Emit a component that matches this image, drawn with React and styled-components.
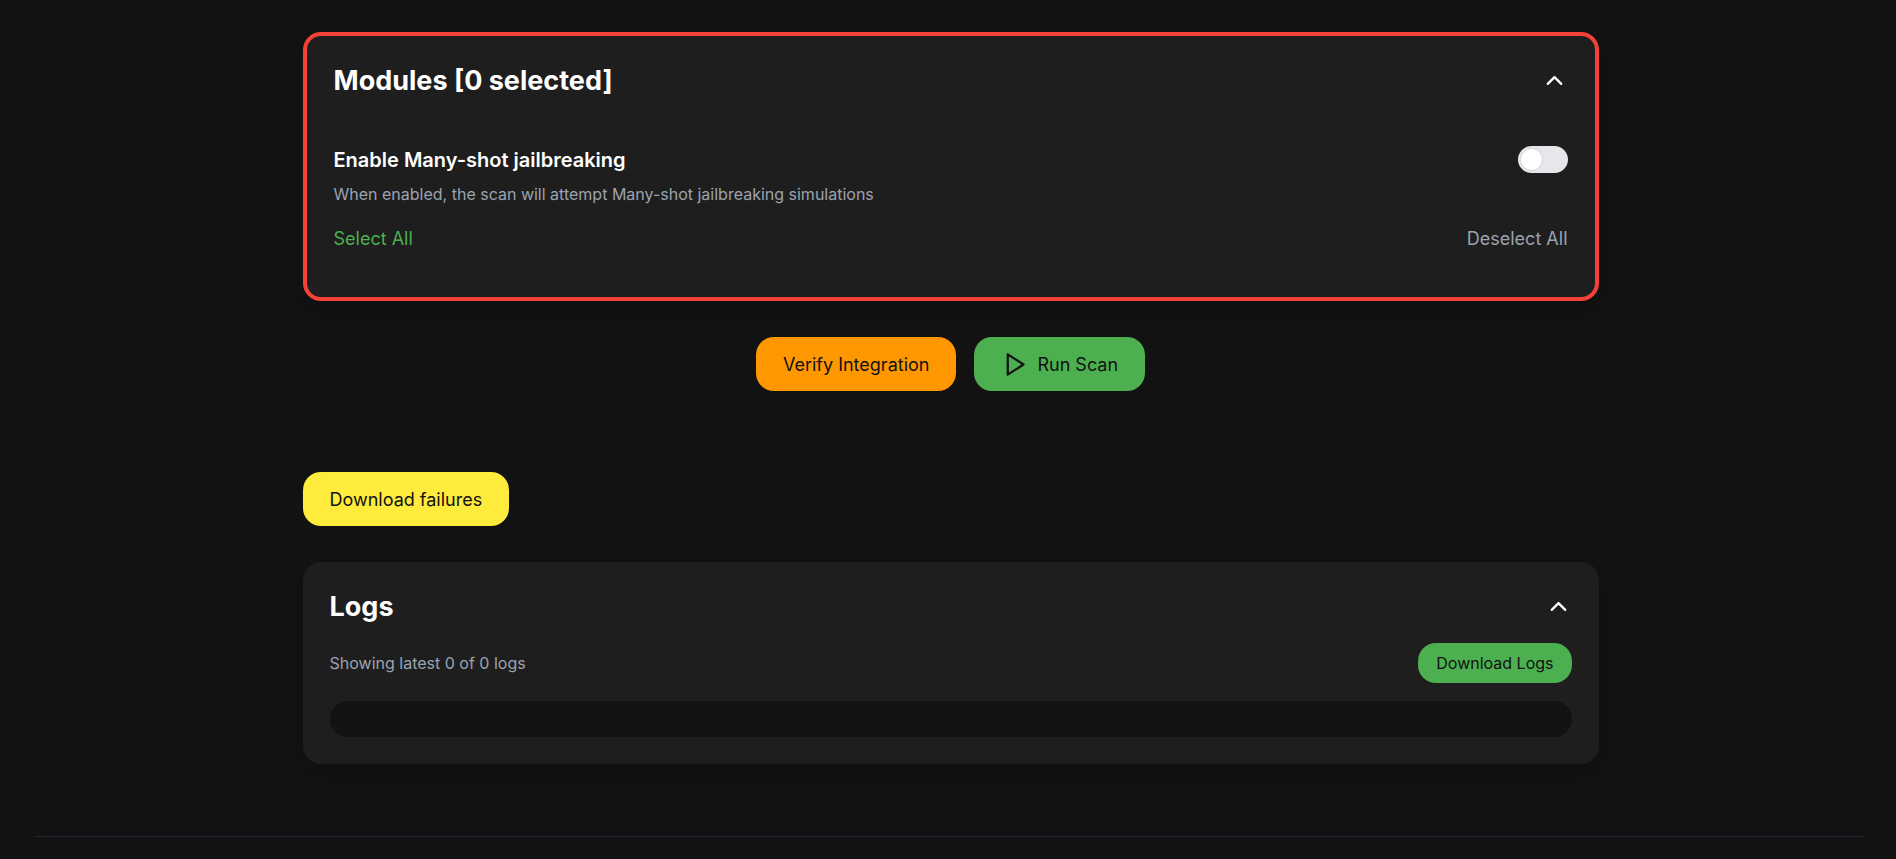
import React, { useState } from "react";
import styled, { createGlobalStyle } from "styled-components";
import { ChevronUp } from "lucide-react";

const GlobalStyle = createGlobalStyle`
  *, *::before, *::after { box-sizing: border-box; }
  body {
    margin: 0;
    background: #121212;
    color: #fff;
    font-family: Inter, "Liberation Sans", sans-serif;
    font-size: 18px;
    line-height: 27px;
  }
  h2, p { margin: 0; }
  button { font: inherit; border: 0; cursor: pointer; }
`;

const Page = styled.div`
  padding: 32px 31px 21px 36px;
`;

const Container = styled.main`
  max-width: 1296px;
  margin: 0 auto;
`;

const Card = styled.section`
  padding: 27px;
  border: ${(p) => (p.$alert ? "4px solid #f44336" : "0")};
  border-radius: 18px;
  background: #1e1e1e;
  box-shadow: 0 10px 15px -3px rgba(0, 0, 0, 0.1);
`;

const Row = styled.div`
  display: flex;
  align-items: center;
  justify-content: space-between;
`;

const ModulesBody = styled.div`
  padding: 47px 0 18px;
`;

const SettingRow = styled(Row)`
  align-items: flex-start;
`;

const SelectRow = styled(Row)`
  margin-top: 20px;
`;

const LogsRow = styled(Row)`
  margin: 18px 0;
`;

const Title = styled.h2`
  font-size: 27px;
  line-height: 36px;
  font-weight: 700;
`;

const SettingLabel = styled.label`
  font-size: 20px;
  line-height: 29px;
  font-weight: 600;
`;

const Note = styled.p`
  font-size: 16px;
  line-height: 22px;
  color: #9ca3af;
`;

const ModuleNote = styled(Note)`
  margin-top: 8px;
`;

const IconButton = styled.button`
  display: flex;
  padding: 0 0 1px;
  background: none;
  color: #fff;
`;

const TextButton = styled.button`
  padding: 0;
  background: none;
  color: ${(p) => p.$color};
`;

const Switch = styled.input`
  appearance: none;
  display: flex;
  align-items: center;
  width: 50px;
  height: 27px;
  margin: 0;
  padding: 0 2px;
  border-radius: 14px;
  background: ${(p) => (p.checked ? "#4caf50" : "#e5e7eb")};
  cursor: pointer;

  &::before {
    content: "";
    width: 23px;
    height: 23px;
    border: 1px solid #d1d5db;
    border-radius: 50%;
    background: #fff;
    margin-left: ${(p) => (p.checked ? "auto" : "0")};
  }
`;

const Button = styled.button`
  display: inline-flex;
  align-items: center;
  gap: 9px;
  min-height: ${(p) => (p.$small ? "40px" : "54px")};
  padding: 0 ${(p) => (p.$small ? "18px" : "27px")};
  border-radius: 18px;
  background: ${(p) => p.$color};
  color: #121212;
  font-size: ${(p) => (p.$small ? "16px" : "18px")};
  font-weight: 400;
`;

const Actions = styled.div`
  display: flex;
  justify-content: center;
  gap: 18px;
  margin: 36px 0 81px;
`;

const Failures = styled.div`
  display: flex;
  margin-bottom: 36px;
`;

const LogList = styled.div`
  min-height: 36px;
  border-radius: 18px;
  background: #121212;
`;

const Divider = styled.hr`
  height: 1px;
  margin: 72px 0 0;
  border: 0;
  background: #1f2937;
`;

const PlayIcon = () => (
  <svg
    width="27"
    height="27"
    viewBox="0 0 24 24"
    fill="none"
    stroke="currentColor"
    strokeWidth="2"
    strokeLinecap="round"
    strokeLinejoin="round"
    aria-hidden="true"
  >
    <polygon points="6 3 20 12 6 21 6 3" />
  </svg>
);

export default function App() {
  const [manyShot, setManyShot] = useState(false);
  return (
    <>
      <GlobalStyle />
      <Page>
        <Container>
          <Card $alert>
            <Row>
              <Title>Modules [0 selected]</Title>
              <IconButton aria-label="Collapse modules">
                <ChevronUp size={27} />
              </IconButton>
            </Row>
            <ModulesBody>
              <SettingRow>
                <SettingLabel htmlFor="many-shot">Enable Many-shot jailbreaking</SettingLabel>
                <Switch
                  id="many-shot"
                  type="checkbox"
                  role="switch"
                  checked={manyShot}
                  onChange={(e) => setManyShot(e.target.checked)}
                />
              </SettingRow>
              <ModuleNote>
                When enabled, the scan will attempt Many-shot jailbreaking simulations
              </ModuleNote>
              <SelectRow>
                <TextButton $color="#4caf50">Select All</TextButton>
                <TextButton $color="#9ca3af">Deselect All</TextButton>
              </SelectRow>
            </ModulesBody>
          </Card>
          <Actions>
            <Button $color="#ff9800">Verify Integration</Button>
            <Button $color="#4caf50">
              <PlayIcon />
              Run Scan
            </Button>
          </Actions>
          <Failures>
            <Button $color="#ffeb3b">Download failures</Button>
          </Failures>
          <Card>
            <Row>
              <Title>Logs</Title>
              <IconButton aria-label="Collapse logs">
                <ChevronUp size={27} />
              </IconButton>
            </Row>
            <LogsRow>
              <Note>Showing latest 0 of 0 logs</Note>
              <Button $small $color="#4caf50">
                Download Logs
              </Button>
            </LogsRow>
            <LogList role="log" />
          </Card>
        </Container>
        <Divider />
      </Page>
    </>
  );
}
